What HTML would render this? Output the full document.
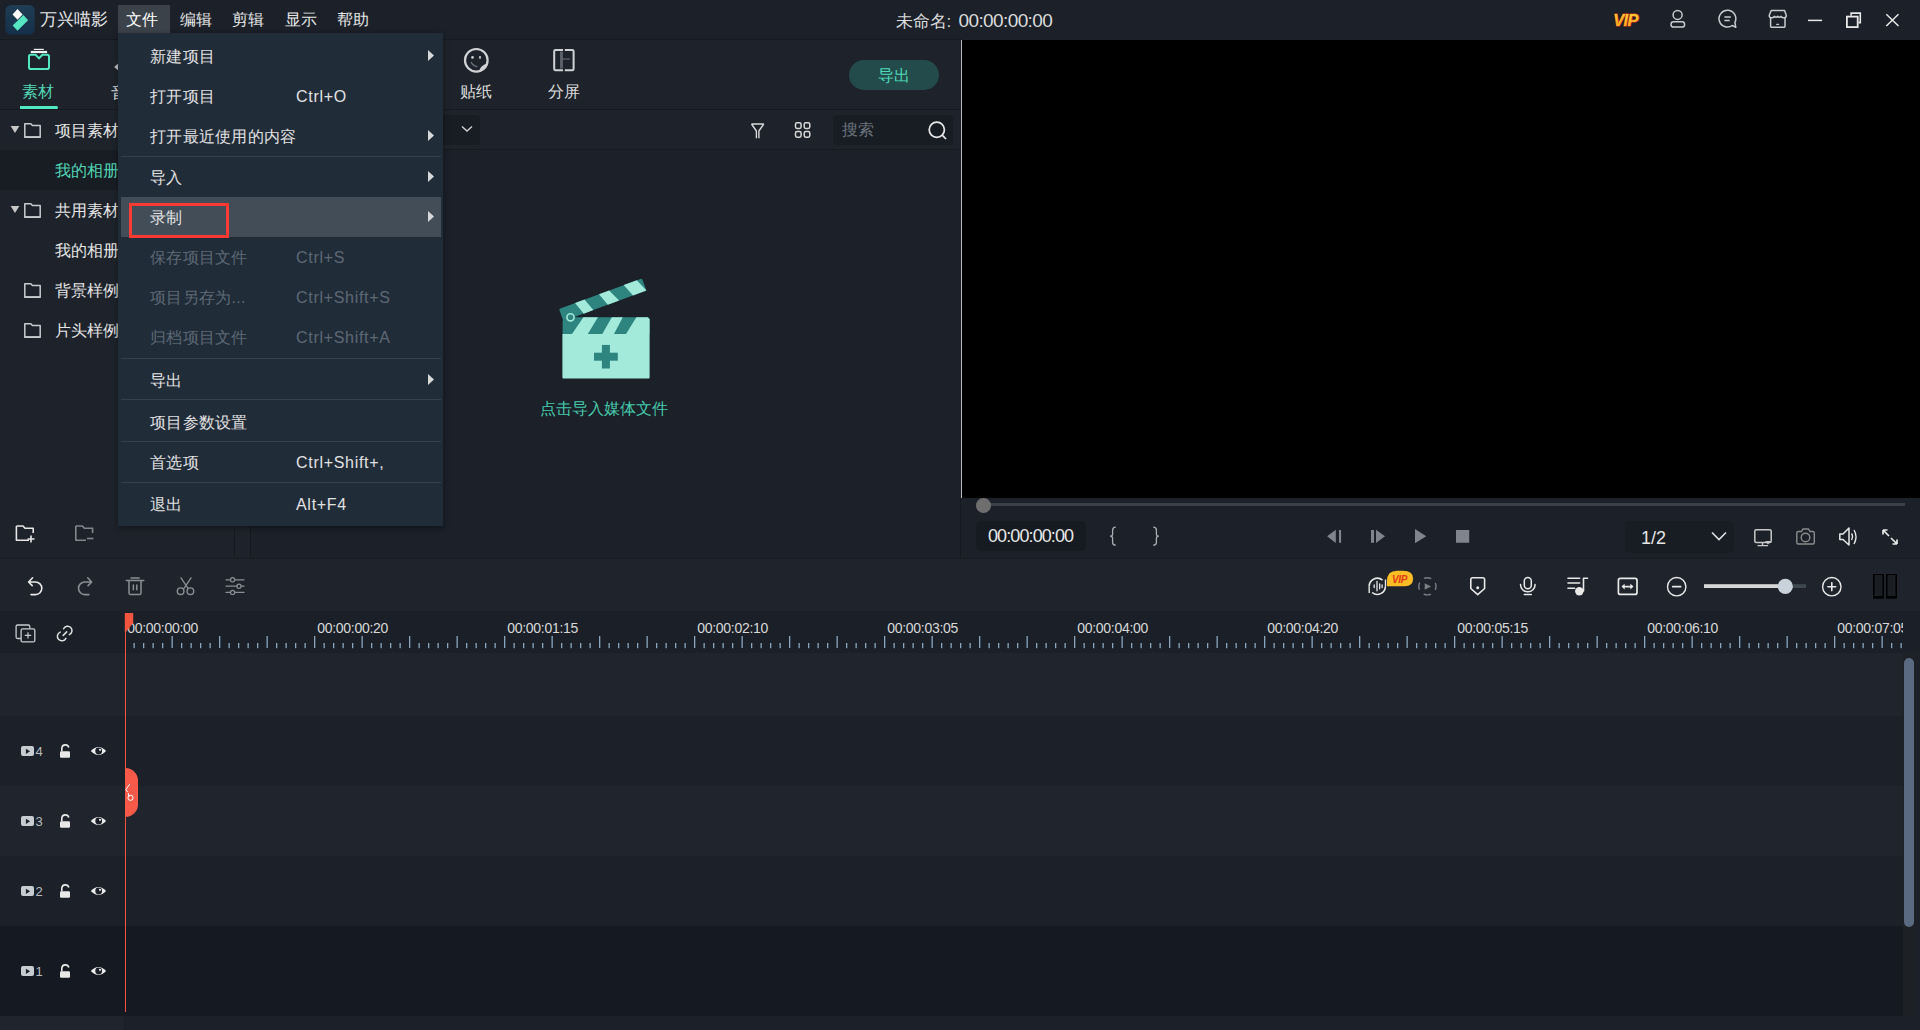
<!DOCTYPE html>
<html><head><meta charset="utf-8">
<style>
*{box-sizing:border-box;margin:0;padding:0}
html,body{width:1920px;height:1030px;overflow:hidden;background:#1c2129;font-family:"Liberation Sans",sans-serif;color:#dcdcdc}
.a{position:absolute}
.t{position:absolute;white-space:nowrap;line-height:1}
.m{letter-spacing:0.25px}
svg{position:absolute;overflow:visible}
</style></head><body>
<!-- title bar -->
<div class="a" style="left:0;top:0;width:1920px;height:40px;background:#1b2029"></div>
<div class="a" style="left:0;top:39px;width:962px;height:1px;background:#161b22"></div>
<!-- title content -->
<svg style="left:0;top:0" width="40" height="40">
<defs><linearGradient id="lg" x1="0" y1="0" x2="0" y2="1"><stop offset="0" stop-color="#1f3d55"/><stop offset="1" stop-color="#15304a"/></linearGradient></defs>
<rect x="5.4" y="5.1" width="29.3" height="29.5" rx="5.6" fill="url(#lg)"/>
<polygon points="17.5,9.1 22.6,14.5 17.5,19.8 12.5,14.4" fill="#fff"/>
<polygon points="23.4,15 28.1,20.2 17.5,30.7 12.7,25.4" fill="#56e6c4"/>
</svg>
<div class="t" style="left:40px;top:11px;font-size:17px;color:#e6e6e6">万兴喵影</div>
<div class="a" style="left:118px;top:5px;width:52px;height:28px;background:#3c4249"></div>
<div class="t" style="left:126px;top:12px;font-size:16px;color:#fff">文件</div>
<div class="t" style="left:180px;top:12px;font-size:16px;color:#e6e6e6">编辑</div>
<div class="t" style="left:232px;top:12px;font-size:16px;color:#e6e6e6">剪辑</div>
<div class="t" style="left:285px;top:12px;font-size:16px;color:#e6e6e6">显示</div>
<div class="t" style="left:337px;top:12px;font-size:16px;color:#e6e6e6">帮助</div>
<div class="t" style="left:895.5px;top:10.5px;font-size:17px;color:#dcdcdc">未命名: <span style="font-size:19px;letter-spacing:-0.6px;margin-left:2.5px;position:relative;top:0.5px">00:00:00:00</span></div>
<svg style="left:1600px;top:0" width="320" height="40">
<defs><linearGradient id="vg" x1="0" y1="0" x2="0" y2="1"><stop offset="0" stop-color="#ffd23a"/><stop offset="1" stop-color="#ffa51c"/></linearGradient></defs>
<text x="13.2" y="25.8" font-family="Liberation Sans" font-weight="bold" font-style="italic" font-size="16.5" letter-spacing="-0.6" fill="url(#vg)" stroke="#d8381a" stroke-width="1.1" paint-order="stroke">VIP</text>
<g fill="none" stroke="#c8ccd0" stroke-width="1.5">
<circle cx="77.6" cy="14.9" r="4.5"/>
<rect x="71" y="21.8" width="13.6" height="5.3" rx="2.6"/>
<path d="M132.3,25.5 A8.4,8.4 0 1 1 134.9,22.5 L135.8,27.3 Z" stroke-linejoin="round"/>
<path d="M124.4,17.1 H130.8 M124.4,20.4 H129.7"/>
<path d="M170.6,17 V26.6 Q170.6,27.3 171.3,27.3 H184.3 Q185,27.3 185,26.6 V17" />
<path d="M171.2,10.5 H184.6 L186.3,15.5 Q186.3,17.8 183.8,17.8 Q181.8,17.8 181,16.3 Q179.5,18.3 177.7,16.3 Q176,18.3 174.4,16.3 Q173.6,17.8 171.6,17.8 Q169.2,17.8 169.2,15.5 Z" stroke-linejoin="round"/>
<path d="M176.2,24.4 H179.1" stroke-width="1.2"/>
<path d="M208,20.4 H222.1" stroke="#e8e8e8" stroke-width="1.5"/>
<rect x="246.9" y="16.6" width="10.8" height="10.5" stroke="#e8e8e8" stroke-width="1.8"/>
<path d="M251.1,15.7 V13.1 H260.3 V22.6 H258.5" stroke="#e8e8e8" stroke-width="1.6"/>
<path d="M286.3,14.2 L298.5,26 M298.5,14.2 L286.3,26" stroke="#e8e8e8" stroke-width="1.5"/>
</g>
</svg>
<!-- media panel -->
<div class="a" id="media" style="left:0;top:40px;width:960px;height:518px;background:#1e232b"></div>
<!-- media content -->
<div class="a" style="left:0;top:109px;width:960px;height:1px;background:#171b21"></div>
<div class="a" style="left:251px;top:150px;width:709px;height:408px;background:#1b2029"></div>
<div class="a" style="left:250px;top:149px;width:710px;height:1px;background:#171b21"></div>
<div class="a" style="left:234px;top:110px;width:1px;height:448px;background:#15191f"></div>
<div class="a" style="left:250px;top:110px;width:1px;height:448px;background:#15191f"></div>
<div class="a" style="left:0;top:150px;width:234px;height:40px;background:#181d24"></div>
<svg style="left:26px;top:46px" width="28" height="28">
<rect x="4.8" y="1.8" width="10" height="1.2" fill="#f2f2f2" transform="translate(3,1)"/>
<rect x="4.8" y="4.9" width="16.3" height="2.2" fill="#f2f2f2"/>
<path d="M3,10.6 Q3,8.8 4.8,8.8 H9.6 L13,12.4 L16.4,8.8 H21.2 Q23,8.8 23,10.6 V21.2 Q23,23 21.2,23 H4.8 Q3,23 3,21.2 Z" fill="none" stroke="#52e8c4" stroke-width="2" stroke-linejoin="round"/>
</svg>
<div class="t" style="left:22px;top:84px;font-size:16px;color:#52d6b5">素材</div>
<div class="a" style="left:20px;top:106px;width:38px;height:3px;background:#52e8c4;border-radius:0 2px 2px 0"></div>
<div class="t" style="left:110.5px;top:85px;font-size:16px;color:#dcdcdc">音频</div>
<svg style="left:110px;top:60px" width="10" height="14"><polygon points="4.6,7 8.5,3.4 8.5,10.4" fill="#c8c8c8" stroke="#c8c8c8" stroke-width="0.6" stroke-linejoin="round"/></svg>
<div class="t" style="left:460px;top:84px;font-size:16px;color:#dcdcdc">贴纸</div>
<div class="t" style="left:548px;top:84px;font-size:16px;color:#dcdcdc">分屏</div>
<svg style="left:10px;top:125px" width="10" height="8"><polygon points="0.6,0.9 9.4,0.9 5,8" fill="#c8c8c8"/></svg>
<svg style="left:24px;top:123px" width="18" height="16"><path d="M0.8,0.8 H6.8 L8.4,2.5 H16.2 V14.2 H0.8 Z" fill="none" stroke="#c8ccd0" stroke-width="1.5" stroke-linejoin="round"/><rect x="0.8" y="13.2" width="15.4" height="1.8" fill="#c8ccd0"/></svg>
<div class="t" style="left:55px;top:123px;font-size:16px;color:#e6e6e6">项目素材</div>
<div class="t" style="left:55px;top:163px;font-size:16px;color:#52d6b5">我的相册</div>
<svg style="left:10px;top:205px" width="10" height="8"><polygon points="0.6,0.9 9.4,0.9 5,8" fill="#c8c8c8"/></svg>
<svg style="left:24px;top:203px" width="18" height="16"><path d="M0.8,0.8 H6.8 L8.4,2.5 H16.2 V14.2 H0.8 Z" fill="none" stroke="#c8ccd0" stroke-width="1.5" stroke-linejoin="round"/><rect x="0.8" y="13.2" width="15.4" height="1.8" fill="#c8ccd0"/></svg>
<div class="t" style="left:55px;top:203px;font-size:16px;color:#e6e6e6">共用素材</div>
<div class="t" style="left:55px;top:243px;font-size:16px;color:#e6e6e6">我的相册</div>
<svg style="left:24px;top:283px" width="18" height="16"><path d="M0.8,0.8 H6.8 L8.4,2.5 H16.2 V14.2 H0.8 Z" fill="none" stroke="#c8ccd0" stroke-width="1.5" stroke-linejoin="round"/><rect x="0.8" y="13.2" width="15.4" height="1.8" fill="#c8ccd0"/></svg>
<div class="t" style="left:55px;top:283px;font-size:16px;color:#e6e6e6">背景样例</div>
<svg style="left:24px;top:323px" width="18" height="16"><path d="M0.8,0.8 H6.8 L8.4,2.5 H16.2 V14.2 H0.8 Z" fill="none" stroke="#c8ccd0" stroke-width="1.5" stroke-linejoin="round"/><rect x="0.8" y="13.2" width="15.4" height="1.8" fill="#c8ccd0"/></svg>
<div class="t" style="left:55px;top:323px;font-size:16px;color:#e6e6e6">片头样例</div>
<div class="a" style="left:849px;top:60px;width:90px;height:30px;border-radius:15px;background:#234b4b"></div>
<div class="t" style="left:877.5px;top:68px;font-size:16px;color:#4fdcb8">导出</div>
<div class="a" style="left:240px;top:115px;width:240px;height:30px;border-radius:4px;background:#181d24"></div>
<svg style="left:461px;top:125px" width="12" height="8"><polyline points="1,1.5 6,6 11,1.5" fill="none" stroke="#d0d0d0" stroke-width="1.4"/></svg>
<div class="a" style="left:833px;top:115px;width:120px;height:30px;border-radius:4px;background:#181d24"></div>
<div class="t" style="left:842px;top:122px;font-size:16px;color:#6c737b">搜索</div>
<!-- preview -->
<div class="a" style="left:960px;top:40px;width:960px;height:518px;background:#1c2129"></div>
<div class="a" style="left:962px;top:40px;width:958px;height:458px;background:#000"></div>
<div class="a" style="left:961px;top:40px;width:1px;height:458px;background:#b8b8b8"></div>
<div class="a" style="left:960px;top:498px;width:1px;height:60px;background:#161a20"></div>
<!-- clapper -->
<svg style="left:0;top:0" width="960" height="560">
<g transform="translate(559.1,309.4) rotate(-20.2)">
<rect x="0" y="-0.5" width="88.5" height="13" rx="1.5" fill="#2e8580"/>
<polygon points="17.2,-0.5 27.2,-0.5 31.9,12.5 21.7,12.5" fill="#a3eadb"/>
<polygon points="42.7,-0.5 53.5,-0.5 59.4,12.5 47.3,12.5" fill="#a3eadb"/>
<polygon points="69,-0.5 83,-0.5 88.5,12.5 74.2,12.5" fill="#a3eadb"/>
</g>
<path d="M562.6,322 Q562.6,317.3 567,317.3 H647.6 Q649.6,317.3 649.6,319.3 V334 H562.6 Z" fill="#2e8580"/>
<polygon points="572,334 587.8,334 597.9,317.3 583.4,317.3" fill="#a3eadb"/>
<polygon points="602.3,334 614,334 622.8,317.3 611.8,317.3" fill="#a3eadb"/>
<polygon points="626,334 649.6,334 649.6,319.3 647.6,317.3 636.4,317.3" fill="#a3eadb"/>
<circle cx="570.5" cy="317.3" r="3.6" fill="#2e8580" stroke="#a3eadb" stroke-width="1.6"/>
<path d="M562.4,334 H649.6 V377.5 Q649.6,378.5 648.6,378.5 H563.4 Q562.4,378.5 562.4,377.5 Z" fill="#a3eadb"/>
<rect x="601.9" y="344.9" width="8" height="23.6" fill="#2e8580"/>
<rect x="594" y="352.7" width="23.8" height="8" fill="#2e8580"/>
</svg>
<div class="t" style="left:540px;top:401px;font-size:16px;color:#45c9ab">点击导入媒体文件</div>
<!-- media toolbar icons -->
<svg style="left:0;top:0" width="960" height="160">
<path d="M751.5,124 H763.8 M751.5,124 L756.4,131 V138.2 M763.8,124 L758.9,131 V138.2" fill="none" stroke="#d8d8d8" stroke-width="1.4" stroke-linejoin="round"/>
<rect x="795.5" y="122.8" width="5.6" height="5.6" rx="1.6" fill="none" stroke="#d8d8d8" stroke-width="1.5"/>
<rect x="804.2" y="122.8" width="5.6" height="5.6" rx="1.6" fill="none" stroke="#d8d8d8" stroke-width="1.5"/>
<rect x="795.5" y="131.6" width="5.6" height="5.6" rx="1.6" fill="none" stroke="#d8d8d8" stroke-width="1.5"/>
<rect x="804.2" y="131.6" width="5.6" height="5.6" rx="1.6" fill="none" stroke="#d8d8d8" stroke-width="1.5"/>
<circle cx="936.8" cy="129.8" r="7.6" fill="none" stroke="#e8e8e8" stroke-width="1.7"/>
<line x1="942.2" y1="135.2" x2="946" y2="139" stroke="#e8e8e8" stroke-width="1.7"/>
<!-- sticker -->
<circle cx="476.3" cy="60.3" r="11.3" fill="none" stroke="#d0d2d5" stroke-width="2.2"/>
<circle cx="472.5" cy="57.4" r="1.3" fill="#d0d2d5"/><rect x="479.2" y="56" width="1.6" height="2.8" fill="#d0d2d5"/>
<path d="M471,62.2 Q473,66 477.3,66.8" fill="none" stroke="#6a6f75" stroke-width="1.4"/>
<path d="M479.2,72 Q479.5,65 488.2,63.5 A12.3,12.3 0 0 1 479.2,72 Z" fill="#d0d2d5"/>
<!-- split -->
<path d="M563,49.9 H555.6 Q554.2,49.9 554.2,51.3 V68.9 Q554.2,70.3 555.6,70.3 H563 M564.8,49.9 H572.2 Q573.6,49.9 573.6,51.3 V68.9 Q573.6,70.3 572.2,70.3 H564.8" fill="none" stroke="#d0d2d5" stroke-width="2"/>
<rect x="560" y="51.5" width="3" height="17" fill="#5a6068"/>
<path d="M563,59 H570.2" stroke="#5a6068" stroke-width="1.3"/>
</svg>
<!-- bottom folder icons -->
<svg style="left:0;top:0" width="120" height="560">
<path d="M16.4,526 H23 L25,528.3 H33.2 V533 M29,540.2 H16.4 V526" fill="none" stroke="#e6e6e6" stroke-width="1.6" stroke-linejoin="round"/>
<path d="M31,535.5 V542.5 M27.5,539 H34.5" stroke="#e6e6e6" stroke-width="1.6"/>
<path d="M75.8,526 H82.4 L84.4,528.3 H92.6 V533 M86,540.2 H75.8 V526" fill="none" stroke="#80868c" stroke-width="1.6" stroke-linejoin="round"/>
<path d="M87,538.5 H93.5" stroke="#80868c" stroke-width="1.6"/>
</svg>
<!-- preview controls -->
<div class="a" style="left:984px;top:503px;width:921px;height:3px;background:#3a4149"></div>
<div class="a" style="left:976px;top:497.5px;width:15px;height:15px;border-radius:50%;background:#6e6e6e"></div>
<div class="a" style="left:976px;top:521px;width:110px;height:30px;border-radius:5px;background:#161b21"></div>
<div class="t" style="left:988px;top:527px;font-size:18px;letter-spacing:-0.9px;color:#e8e8e8">00:00:00:00</div>
<svg style="left:1100px;top:520px" width="70" height="30">
<path d="M15.8,7.2 Q12.6,7.2 12.6,10.2 V14.2 Q12.6,16 10.2,16.2 Q12.6,16.4 12.6,18.2 V22.4 Q12.6,25.2 15.8,25.2" fill="none" stroke="#a8acb0" stroke-width="1.3"/>
<path d="M53.2,7.2 Q56.4,7.2 56.4,10.2 V14.2 Q56.4,16 58.8,16.2 Q56.4,16.4 56.4,18.2 V22.4 Q56.4,25.2 53.2,25.2" fill="none" stroke="#a8acb0" stroke-width="1.3"/>
</svg>
<svg style="left:1300px;top:500px" width="620" height="60">
<polygon points="27.1,36.25 35.8,29.8 35.8,42.9" fill="#7f858d"/>
<rect x="39" y="30" width="2.1" height="12.75" fill="#7f858d"/>
<rect x="71" y="30" width="3" height="12.75" fill="#7f858d"/>
<polygon points="76,29.8 76,42.9 85,36.25" fill="#7f858d"/>
<polygon points="115,29 115,43.2 126.25,36.25" fill="#7f858d"/>
<rect x="156" y="30" width="13.2" height="12.75" fill="#7f858d"/>
</svg>
<div class="a" style="left:1625px;top:521px;width:109px;height:32px;border-radius:5px;background:#181d24"></div>
<div class="t" style="left:1641px;top:529px;font-size:18px;color:#e6e6e6">1/2</div>
<svg style="left:1700px;top:520px" width="220" height="40">
<polyline points="12,12.5 19,19.5 26,12.5" fill="none" stroke="#e0e0e0" stroke-width="1.6"/>
<rect x="54.8" y="9.8" width="16.4" height="12.6" rx="1.5" fill="none" stroke="#c8c8c8" stroke-width="1.5"/>
<path d="M62.5,22.5 V25.5 M57.5,25.6 H68" stroke="#c8c8c8" stroke-width="1.4"/>
<polygon points="65,21 71,21 68,24.5" fill="#c8c8c8"/>
<path d="M96.8,13 Q96.8,11.5 98.3,11.5 H101.5 L103,9 H108.5 L110,11.5 H112.8 Q114.3,11.5 114.3,13 V22.5 Q114.3,24 112.8,24 H98.3 Q96.8,24 96.8,22.5 Z" fill="none" stroke="#8a8a8a" stroke-width="1.4"/>
<circle cx="105.5" cy="17.5" r="4.3" fill="none" stroke="#8a8a8a" stroke-width="1.4"/>
<path d="M139.8,14 H143 L149,8 V25 L143,19.5 H139.8 Z" fill="none" stroke="#e6e6e6" stroke-width="1.5" stroke-linejoin="round"/>
<path d="M151.5,13.5 Q153.5,16.5 151.5,20" fill="none" stroke="#e6e6e6" stroke-width="1.4"/>
<path d="M154,10 Q158,16.5 154,24" fill="none" stroke="#e6e6e6" stroke-width="1.4"/>
<path d="M183,10 L189,16 M183,10 V14.5 M183,10 H187.5" fill="none" stroke="#e8e8e8" stroke-width="1.7"/>
<path d="M197,24 L191,18 M197,24 V19.5 M197,24 H192.5" fill="none" stroke="#e8e8e8" stroke-width="1.7"/>
</svg>
<!-- timeline toolbar -->
<div class="a" style="left:0;top:558px;width:1920px;height:1px;background:#181c22"></div>
<div class="a" style="left:0;top:559px;width:1920px;height:52px;background:#1f242c"></div>
<!-- ruler -->
<div class="a" style="left:0;top:611px;width:1920px;height:42px;background:#1b2028"></div>
<!-- tracks -->
<div class="a" style="left:0;top:653px;width:1903px;height:63px;background:#1f242d"></div>
<div class="a" style="left:0;top:716px;width:1903px;height:70px;background:#1b2029"></div>
<div class="a" style="left:0;top:786px;width:1903px;height:70px;background:#1f242d"></div>
<div class="a" style="left:0;top:856px;width:1903px;height:70px;background:#1b2029"></div>
<div class="a" style="left:0;top:926px;width:1903px;height:89.5px;background:#151a22"></div>
<div class="a" style="left:1903px;top:653px;width:12px;height:362.5px;background:#1d2125"></div>
<div class="a" style="left:1904px;top:658px;width:10px;height:269px;border-radius:5px;background:#5a6a80"></div>
<div class="a" style="left:0;top:1015.5px;width:1920px;height:14.5px;background:#1c2129"></div>
<div class="a" style="left:0;top:1015.5px;width:124px;height:14.5px;background:#1f242d"></div>
<div class="a" style="left:124px;top:1015.5px;width:1px;height:14.5px;background:#191d23"></div>

<!-- timeline toolbar icons -->
<svg style="left:0;top:0" width="1920" height="1030">
<g fill="none" stroke-linecap="round" stroke-linejoin="round">
<path d="M32.6,577.8 L28.6,582 L32.2,585.6 M28.6,582 H35.5 A6.3,6.3 0 0 1 35.5,594.6 H31" stroke="#e8e8e8" stroke-width="1.6"/>
<path d="M87.7,577.8 L91.7,582 L88.1,585.6 M91.7,582 H84.8 A6.3,6.3 0 0 0 84.8,594.6 H88.9" stroke="#8a8e94" stroke-width="1.6"/>
<path d="M126.3,580.5 H143.8 M131,578 H139.2 M129,581 V593 Q129,594.6 130.6,594.6 H139.4 Q141,594.6 141,593 V581 M133.4,585 V589.8 M136.8,585 V589.8" stroke="#8a8e94" stroke-width="1.5"/>
<path d="M181,577.8 L188.2,588.6 M191,577.8 L183.8,588.6" stroke="#8a8e94" stroke-width="1.3"/>
<circle cx="180.6" cy="591.2" r="3.3" stroke="#8a8e94" stroke-width="1.4"/>
<circle cx="190.4" cy="591.2" r="3.3" stroke="#8a8e94" stroke-width="1.4"/>
<path d="M226,579.8 H230.4 M234.8,579.8 H244 M226,586.2 H236.8 M241.2,586.2 H244 M226,592.4 H230.4 M234.8,592.4 H244" stroke="#8a8e94" stroke-width="1.2"/>
<circle cx="232.6" cy="579.8" r="2.1" stroke="#8a8e94" stroke-width="1.2"/>
<circle cx="239" cy="586.2" r="2.1" stroke="#8a8e94" stroke-width="1.2"/>
<circle cx="232.6" cy="592.4" r="2.1" stroke="#8a8e94" stroke-width="1.2"/>
<!-- right -->
<path d="M1382.5,580.1 A8.1,8.1 0 0 0 1369.2,586.3 M1385.4,586.3 A8.1,8.1 0 0 1 1372.1,592.5" stroke="#e8e8e8" stroke-width="1.6" stroke-linecap="butt"/>
<path d="M1385.5,579.6 V586.3 M1369.2,586.3 V593" stroke="#e8e8e8" stroke-width="1.4" stroke-linecap="butt"/>
<path d="M1374.2,585 V587.6 M1377,581.4 V590.8 M1379.7,583.8 V588.8 M1382.1,585 V587.6" stroke="#e8e8e8" stroke-width="1.3"/>
<circle cx="1427.4" cy="586.3" r="8.6" stroke="#7a7f86" stroke-width="1.4" stroke-dasharray="7.5 6" stroke-dashoffset="3.75" stroke-linecap="butt"/>
<path d="M1470.8,579.6 Q1470.8,577.8 1472.6,577.8 H1482.8 Q1484.6,577.8 1484.6,579.6 V588.5 L1477.7,594.6 L1470.8,588.5 Z" stroke="#e8e8e8" stroke-width="1.6"/>
<rect x="1524.3" y="577.6" width="7" height="11.2" rx="3.5" stroke="#e8e8e8" stroke-width="1.5"/>
<path d="M1520.5,584.5 A7.3,7.3 0 0 0 1535.1,584.5 M1524.3,594.5 H1531.3" stroke="#e8e8e8" stroke-width="1.5"/>
<path d="M1568,578.2 H1579.6 M1568,583 H1579.6 M1568,588.3 H1574.6 M1583.5,591 V578.2 H1587.5" stroke="#e8e8e8" stroke-width="1.6"/>
<rect x="1618.4" y="578.4" width="18.6" height="16" rx="2" stroke="#e8e8e8" stroke-width="1.7"/>
<path d="M1624,586.6 H1631" stroke="#e8e8e8" stroke-width="1.6"/>
<circle cx="1676.7" cy="586.7" r="9.2" stroke="#e8e8e8" stroke-width="1.4"/>
<path d="M1672.8,586.7 H1680.6" stroke="#e8e8e8" stroke-width="1.8"/>
<circle cx="1831.8" cy="586.7" r="9.2" stroke="#e8e8e8" stroke-width="1.4"/>
<path d="M1827.9,586.7 H1835.7 M1831.8,582.8 V590.6" stroke="#e8e8e8" stroke-width="1.6"/>
</g>
<circle cx="1579.3" cy="591.3" r="4.2" fill="#e8e8e8"/>
<circle cx="1477.7" cy="587.8" r="1.5" fill="#e8e8e8"/>
<polygon points="1424.7,583.2 1424.7,589.8 1431,586.5" fill="#7a7f86"/>
<polygon points="1621.5,586.6 1624.6,583.8 1624.6,589.4" fill="#e8e8e8"/>
<polygon points="1633.5,586.6 1630.4,583.8 1630.4,589.4" fill="#e8e8e8"/>
<path d="M1387,581 Q1387,570.7 1397,570.7 H1403 Q1413.1,570.7 1413.1,578.5 Q1413.1,586.3 1405,586.3 H1387 Z" fill="#fbbd26"/>
<text x="1392" y="582.6" font-family="Liberation Sans" font-weight="bold" font-style="italic" font-size="10" letter-spacing="-0.4" fill="#e33b17">VIP</text>
<rect x="1704" y="584.2" width="81" height="3.8" fill="#d6d6d6"/>
<rect x="1785" y="584.2" width="21" height="3.8" fill="#3f474f"/>
<circle cx="1785.3" cy="586.4" r="7.6" fill="#c9d1db"/>
<rect x="1873" y="574" width="11" height="24.7" fill="#000"/>
<rect x="1874.5" y="575" width="8" height="21" fill="#1a1d22"/>
<rect x="1886" y="574" width="11" height="24.7" fill="#000"/>
<rect x="1887.5" y="575" width="8" height="21" fill="#1a1d22"/>
</svg>
<svg style="left:0;top:0" width="1920" height="1030">
<rect x="133.50" y="643" width="1.3" height="5.2" fill="#8aa5bd"/>
<rect x="143.00" y="643" width="1.3" height="5.2" fill="#8aa5bd"/>
<rect x="152.50" y="643" width="1.3" height="5.2" fill="#8aa5bd"/>
<rect x="162.00" y="643" width="1.3" height="5.2" fill="#8aa5bd"/>
<rect x="171.50" y="636" width="1.3" height="12" fill="#8aa5bd"/>
<rect x="181.00" y="643" width="1.3" height="5.2" fill="#8aa5bd"/>
<rect x="190.50" y="643" width="1.3" height="5.2" fill="#8aa5bd"/>
<rect x="200.00" y="643" width="1.3" height="5.2" fill="#8aa5bd"/>
<rect x="209.50" y="643" width="1.3" height="5.2" fill="#8aa5bd"/>
<rect x="219.00" y="636" width="1.3" height="12" fill="#8aa5bd"/>
<rect x="228.50" y="643" width="1.3" height="5.2" fill="#8aa5bd"/>
<rect x="238.00" y="643" width="1.3" height="5.2" fill="#8aa5bd"/>
<rect x="247.50" y="643" width="1.3" height="5.2" fill="#8aa5bd"/>
<rect x="257.00" y="643" width="1.3" height="5.2" fill="#8aa5bd"/>
<rect x="266.50" y="636" width="1.3" height="12" fill="#8aa5bd"/>
<rect x="276.00" y="643" width="1.3" height="5.2" fill="#8aa5bd"/>
<rect x="285.50" y="643" width="1.3" height="5.2" fill="#8aa5bd"/>
<rect x="295.00" y="643" width="1.3" height="5.2" fill="#8aa5bd"/>
<rect x="304.50" y="643" width="1.3" height="5.2" fill="#8aa5bd"/>
<rect x="314.00" y="636" width="1.3" height="12" fill="#8aa5bd"/>
<rect x="323.50" y="643" width="1.3" height="5.2" fill="#8aa5bd"/>
<rect x="333.00" y="643" width="1.3" height="5.2" fill="#8aa5bd"/>
<rect x="342.50" y="643" width="1.3" height="5.2" fill="#8aa5bd"/>
<rect x="352.00" y="643" width="1.3" height="5.2" fill="#8aa5bd"/>
<rect x="361.50" y="636" width="1.3" height="12" fill="#8aa5bd"/>
<rect x="371.00" y="643" width="1.3" height="5.2" fill="#8aa5bd"/>
<rect x="380.50" y="643" width="1.3" height="5.2" fill="#8aa5bd"/>
<rect x="390.00" y="643" width="1.3" height="5.2" fill="#8aa5bd"/>
<rect x="399.50" y="643" width="1.3" height="5.2" fill="#8aa5bd"/>
<rect x="409.00" y="636" width="1.3" height="12" fill="#8aa5bd"/>
<rect x="418.50" y="643" width="1.3" height="5.2" fill="#8aa5bd"/>
<rect x="428.00" y="643" width="1.3" height="5.2" fill="#8aa5bd"/>
<rect x="437.50" y="643" width="1.3" height="5.2" fill="#8aa5bd"/>
<rect x="447.00" y="643" width="1.3" height="5.2" fill="#8aa5bd"/>
<rect x="456.50" y="636" width="1.3" height="12" fill="#8aa5bd"/>
<rect x="466.00" y="643" width="1.3" height="5.2" fill="#8aa5bd"/>
<rect x="475.50" y="643" width="1.3" height="5.2" fill="#8aa5bd"/>
<rect x="485.00" y="643" width="1.3" height="5.2" fill="#8aa5bd"/>
<rect x="494.50" y="643" width="1.3" height="5.2" fill="#8aa5bd"/>
<rect x="504.00" y="636" width="1.3" height="12" fill="#8aa5bd"/>
<rect x="513.50" y="643" width="1.3" height="5.2" fill="#8aa5bd"/>
<rect x="523.00" y="643" width="1.3" height="5.2" fill="#8aa5bd"/>
<rect x="532.50" y="643" width="1.3" height="5.2" fill="#8aa5bd"/>
<rect x="542.00" y="643" width="1.3" height="5.2" fill="#8aa5bd"/>
<rect x="551.50" y="636" width="1.3" height="12" fill="#8aa5bd"/>
<rect x="561.00" y="643" width="1.3" height="5.2" fill="#8aa5bd"/>
<rect x="570.50" y="643" width="1.3" height="5.2" fill="#8aa5bd"/>
<rect x="580.00" y="643" width="1.3" height="5.2" fill="#8aa5bd"/>
<rect x="589.50" y="643" width="1.3" height="5.2" fill="#8aa5bd"/>
<rect x="599.00" y="636" width="1.3" height="12" fill="#8aa5bd"/>
<rect x="608.50" y="643" width="1.3" height="5.2" fill="#8aa5bd"/>
<rect x="618.00" y="643" width="1.3" height="5.2" fill="#8aa5bd"/>
<rect x="627.50" y="643" width="1.3" height="5.2" fill="#8aa5bd"/>
<rect x="637.00" y="643" width="1.3" height="5.2" fill="#8aa5bd"/>
<rect x="646.50" y="636" width="1.3" height="12" fill="#8aa5bd"/>
<rect x="656.00" y="643" width="1.3" height="5.2" fill="#8aa5bd"/>
<rect x="665.50" y="643" width="1.3" height="5.2" fill="#8aa5bd"/>
<rect x="675.00" y="643" width="1.3" height="5.2" fill="#8aa5bd"/>
<rect x="684.50" y="643" width="1.3" height="5.2" fill="#8aa5bd"/>
<rect x="694.00" y="636" width="1.3" height="12" fill="#8aa5bd"/>
<rect x="703.50" y="643" width="1.3" height="5.2" fill="#8aa5bd"/>
<rect x="713.00" y="643" width="1.3" height="5.2" fill="#8aa5bd"/>
<rect x="722.50" y="643" width="1.3" height="5.2" fill="#8aa5bd"/>
<rect x="732.00" y="643" width="1.3" height="5.2" fill="#8aa5bd"/>
<rect x="741.50" y="636" width="1.3" height="12" fill="#8aa5bd"/>
<rect x="751.00" y="643" width="1.3" height="5.2" fill="#8aa5bd"/>
<rect x="760.50" y="643" width="1.3" height="5.2" fill="#8aa5bd"/>
<rect x="770.00" y="643" width="1.3" height="5.2" fill="#8aa5bd"/>
<rect x="779.50" y="643" width="1.3" height="5.2" fill="#8aa5bd"/>
<rect x="789.00" y="636" width="1.3" height="12" fill="#8aa5bd"/>
<rect x="798.50" y="643" width="1.3" height="5.2" fill="#8aa5bd"/>
<rect x="808.00" y="643" width="1.3" height="5.2" fill="#8aa5bd"/>
<rect x="817.50" y="643" width="1.3" height="5.2" fill="#8aa5bd"/>
<rect x="827.00" y="643" width="1.3" height="5.2" fill="#8aa5bd"/>
<rect x="836.50" y="636" width="1.3" height="12" fill="#8aa5bd"/>
<rect x="846.00" y="643" width="1.3" height="5.2" fill="#8aa5bd"/>
<rect x="855.50" y="643" width="1.3" height="5.2" fill="#8aa5bd"/>
<rect x="865.00" y="643" width="1.3" height="5.2" fill="#8aa5bd"/>
<rect x="874.50" y="643" width="1.3" height="5.2" fill="#8aa5bd"/>
<rect x="884.00" y="636" width="1.3" height="12" fill="#8aa5bd"/>
<rect x="893.50" y="643" width="1.3" height="5.2" fill="#8aa5bd"/>
<rect x="903.00" y="643" width="1.3" height="5.2" fill="#8aa5bd"/>
<rect x="912.50" y="643" width="1.3" height="5.2" fill="#8aa5bd"/>
<rect x="922.00" y="643" width="1.3" height="5.2" fill="#8aa5bd"/>
<rect x="931.50" y="636" width="1.3" height="12" fill="#8aa5bd"/>
<rect x="941.00" y="643" width="1.3" height="5.2" fill="#8aa5bd"/>
<rect x="950.50" y="643" width="1.3" height="5.2" fill="#8aa5bd"/>
<rect x="960.00" y="643" width="1.3" height="5.2" fill="#8aa5bd"/>
<rect x="969.50" y="643" width="1.3" height="5.2" fill="#8aa5bd"/>
<rect x="979.00" y="636" width="1.3" height="12" fill="#8aa5bd"/>
<rect x="988.50" y="643" width="1.3" height="5.2" fill="#8aa5bd"/>
<rect x="998.00" y="643" width="1.3" height="5.2" fill="#8aa5bd"/>
<rect x="1007.50" y="643" width="1.3" height="5.2" fill="#8aa5bd"/>
<rect x="1017.00" y="643" width="1.3" height="5.2" fill="#8aa5bd"/>
<rect x="1026.50" y="636" width="1.3" height="12" fill="#8aa5bd"/>
<rect x="1036.00" y="643" width="1.3" height="5.2" fill="#8aa5bd"/>
<rect x="1045.50" y="643" width="1.3" height="5.2" fill="#8aa5bd"/>
<rect x="1055.00" y="643" width="1.3" height="5.2" fill="#8aa5bd"/>
<rect x="1064.50" y="643" width="1.3" height="5.2" fill="#8aa5bd"/>
<rect x="1074.00" y="636" width="1.3" height="12" fill="#8aa5bd"/>
<rect x="1083.50" y="643" width="1.3" height="5.2" fill="#8aa5bd"/>
<rect x="1093.00" y="643" width="1.3" height="5.2" fill="#8aa5bd"/>
<rect x="1102.50" y="643" width="1.3" height="5.2" fill="#8aa5bd"/>
<rect x="1112.00" y="643" width="1.3" height="5.2" fill="#8aa5bd"/>
<rect x="1121.50" y="636" width="1.3" height="12" fill="#8aa5bd"/>
<rect x="1131.00" y="643" width="1.3" height="5.2" fill="#8aa5bd"/>
<rect x="1140.50" y="643" width="1.3" height="5.2" fill="#8aa5bd"/>
<rect x="1150.00" y="643" width="1.3" height="5.2" fill="#8aa5bd"/>
<rect x="1159.50" y="643" width="1.3" height="5.2" fill="#8aa5bd"/>
<rect x="1169.00" y="636" width="1.3" height="12" fill="#8aa5bd"/>
<rect x="1178.50" y="643" width="1.3" height="5.2" fill="#8aa5bd"/>
<rect x="1188.00" y="643" width="1.3" height="5.2" fill="#8aa5bd"/>
<rect x="1197.50" y="643" width="1.3" height="5.2" fill="#8aa5bd"/>
<rect x="1207.00" y="643" width="1.3" height="5.2" fill="#8aa5bd"/>
<rect x="1216.50" y="636" width="1.3" height="12" fill="#8aa5bd"/>
<rect x="1226.00" y="643" width="1.3" height="5.2" fill="#8aa5bd"/>
<rect x="1235.50" y="643" width="1.3" height="5.2" fill="#8aa5bd"/>
<rect x="1245.00" y="643" width="1.3" height="5.2" fill="#8aa5bd"/>
<rect x="1254.50" y="643" width="1.3" height="5.2" fill="#8aa5bd"/>
<rect x="1264.00" y="636" width="1.3" height="12" fill="#8aa5bd"/>
<rect x="1273.50" y="643" width="1.3" height="5.2" fill="#8aa5bd"/>
<rect x="1283.00" y="643" width="1.3" height="5.2" fill="#8aa5bd"/>
<rect x="1292.50" y="643" width="1.3" height="5.2" fill="#8aa5bd"/>
<rect x="1302.00" y="643" width="1.3" height="5.2" fill="#8aa5bd"/>
<rect x="1311.50" y="636" width="1.3" height="12" fill="#8aa5bd"/>
<rect x="1321.00" y="643" width="1.3" height="5.2" fill="#8aa5bd"/>
<rect x="1330.50" y="643" width="1.3" height="5.2" fill="#8aa5bd"/>
<rect x="1340.00" y="643" width="1.3" height="5.2" fill="#8aa5bd"/>
<rect x="1349.50" y="643" width="1.3" height="5.2" fill="#8aa5bd"/>
<rect x="1359.00" y="636" width="1.3" height="12" fill="#8aa5bd"/>
<rect x="1368.50" y="643" width="1.3" height="5.2" fill="#8aa5bd"/>
<rect x="1378.00" y="643" width="1.3" height="5.2" fill="#8aa5bd"/>
<rect x="1387.50" y="643" width="1.3" height="5.2" fill="#8aa5bd"/>
<rect x="1397.00" y="643" width="1.3" height="5.2" fill="#8aa5bd"/>
<rect x="1406.50" y="636" width="1.3" height="12" fill="#8aa5bd"/>
<rect x="1416.00" y="643" width="1.3" height="5.2" fill="#8aa5bd"/>
<rect x="1425.50" y="643" width="1.3" height="5.2" fill="#8aa5bd"/>
<rect x="1435.00" y="643" width="1.3" height="5.2" fill="#8aa5bd"/>
<rect x="1444.50" y="643" width="1.3" height="5.2" fill="#8aa5bd"/>
<rect x="1454.00" y="636" width="1.3" height="12" fill="#8aa5bd"/>
<rect x="1463.50" y="643" width="1.3" height="5.2" fill="#8aa5bd"/>
<rect x="1473.00" y="643" width="1.3" height="5.2" fill="#8aa5bd"/>
<rect x="1482.50" y="643" width="1.3" height="5.2" fill="#8aa5bd"/>
<rect x="1492.00" y="643" width="1.3" height="5.2" fill="#8aa5bd"/>
<rect x="1501.50" y="636" width="1.3" height="12" fill="#8aa5bd"/>
<rect x="1511.00" y="643" width="1.3" height="5.2" fill="#8aa5bd"/>
<rect x="1520.50" y="643" width="1.3" height="5.2" fill="#8aa5bd"/>
<rect x="1530.00" y="643" width="1.3" height="5.2" fill="#8aa5bd"/>
<rect x="1539.50" y="643" width="1.3" height="5.2" fill="#8aa5bd"/>
<rect x="1549.00" y="636" width="1.3" height="12" fill="#8aa5bd"/>
<rect x="1558.50" y="643" width="1.3" height="5.2" fill="#8aa5bd"/>
<rect x="1568.00" y="643" width="1.3" height="5.2" fill="#8aa5bd"/>
<rect x="1577.50" y="643" width="1.3" height="5.2" fill="#8aa5bd"/>
<rect x="1587.00" y="643" width="1.3" height="5.2" fill="#8aa5bd"/>
<rect x="1596.50" y="636" width="1.3" height="12" fill="#8aa5bd"/>
<rect x="1606.00" y="643" width="1.3" height="5.2" fill="#8aa5bd"/>
<rect x="1615.50" y="643" width="1.3" height="5.2" fill="#8aa5bd"/>
<rect x="1625.00" y="643" width="1.3" height="5.2" fill="#8aa5bd"/>
<rect x="1634.50" y="643" width="1.3" height="5.2" fill="#8aa5bd"/>
<rect x="1644.00" y="636" width="1.3" height="12" fill="#8aa5bd"/>
<rect x="1653.50" y="643" width="1.3" height="5.2" fill="#8aa5bd"/>
<rect x="1663.00" y="643" width="1.3" height="5.2" fill="#8aa5bd"/>
<rect x="1672.50" y="643" width="1.3" height="5.2" fill="#8aa5bd"/>
<rect x="1682.00" y="643" width="1.3" height="5.2" fill="#8aa5bd"/>
<rect x="1691.50" y="636" width="1.3" height="12" fill="#8aa5bd"/>
<rect x="1701.00" y="643" width="1.3" height="5.2" fill="#8aa5bd"/>
<rect x="1710.50" y="643" width="1.3" height="5.2" fill="#8aa5bd"/>
<rect x="1720.00" y="643" width="1.3" height="5.2" fill="#8aa5bd"/>
<rect x="1729.50" y="643" width="1.3" height="5.2" fill="#8aa5bd"/>
<rect x="1739.00" y="636" width="1.3" height="12" fill="#8aa5bd"/>
<rect x="1748.50" y="643" width="1.3" height="5.2" fill="#8aa5bd"/>
<rect x="1758.00" y="643" width="1.3" height="5.2" fill="#8aa5bd"/>
<rect x="1767.50" y="643" width="1.3" height="5.2" fill="#8aa5bd"/>
<rect x="1777.00" y="643" width="1.3" height="5.2" fill="#8aa5bd"/>
<rect x="1786.50" y="636" width="1.3" height="12" fill="#8aa5bd"/>
<rect x="1796.00" y="643" width="1.3" height="5.2" fill="#8aa5bd"/>
<rect x="1805.50" y="643" width="1.3" height="5.2" fill="#8aa5bd"/>
<rect x="1815.00" y="643" width="1.3" height="5.2" fill="#8aa5bd"/>
<rect x="1824.50" y="643" width="1.3" height="5.2" fill="#8aa5bd"/>
<rect x="1834.00" y="636" width="1.3" height="12" fill="#8aa5bd"/>
<rect x="1843.50" y="643" width="1.3" height="5.2" fill="#8aa5bd"/>
<rect x="1853.00" y="643" width="1.3" height="5.2" fill="#8aa5bd"/>
<rect x="1862.50" y="643" width="1.3" height="5.2" fill="#8aa5bd"/>
<rect x="1872.00" y="643" width="1.3" height="5.2" fill="#8aa5bd"/>
<rect x="1881.50" y="636" width="1.3" height="12" fill="#8aa5bd"/>
<rect x="1891.00" y="643" width="1.3" height="5.2" fill="#8aa5bd"/>
<rect x="1900.50" y="643" width="1.3" height="5.2" fill="#8aa5bd"/>
</svg>
<div class="a" style="left:0;top:611px;width:1903px;height:42px;overflow:hidden">
<div class="t" style="left:127.3px;top:9.5px;font-size:14px;letter-spacing:-0.3px;color:#d8d8d8">00:00:00:00</div>
<div class="t" style="left:317.3px;top:9.5px;font-size:14px;letter-spacing:-0.3px;color:#d8d8d8">00:00:00:20</div>
<div class="t" style="left:507.3px;top:9.5px;font-size:14px;letter-spacing:-0.3px;color:#d8d8d8">00:00:01:15</div>
<div class="t" style="left:697.3px;top:9.5px;font-size:14px;letter-spacing:-0.3px;color:#d8d8d8">00:00:02:10</div>
<div class="t" style="left:887.3px;top:9.5px;font-size:14px;letter-spacing:-0.3px;color:#d8d8d8">00:00:03:05</div>
<div class="t" style="left:1077.3px;top:9.5px;font-size:14px;letter-spacing:-0.3px;color:#d8d8d8">00:00:04:00</div>
<div class="t" style="left:1267.3px;top:9.5px;font-size:14px;letter-spacing:-0.3px;color:#d8d8d8">00:00:04:20</div>
<div class="t" style="left:1457.3px;top:9.5px;font-size:14px;letter-spacing:-0.3px;color:#d8d8d8">00:00:05:15</div>
<div class="t" style="left:1647.3px;top:9.5px;font-size:14px;letter-spacing:-0.3px;color:#d8d8d8">00:00:06:10</div>
<div class="t" style="left:1837.3px;top:9.5px;font-size:14px;letter-spacing:-0.3px;color:#d8d8d8">00:00:07:05</div>
</div>
<svg style="left:0.6px;top:600.8px" width="100" height="60">
<path d="M28.8,27.5 V25.5 Q28.8,24 27.3,24 H16.6 Q15.1,24 15.1,25.5 V36 Q15.1,37.5 16.6,37.5 H20.1" fill="none" stroke="#c8ccd0" stroke-width="1.3"/>
<rect x="20.1" y="27.8" width="13.7" height="13.1" rx="1.5" fill="none" stroke="#c8ccd0" stroke-width="1.3"/>
<path d="M27,31.2 V37.6 M23.8,34.4 H30.2" stroke="#c8ccd0" stroke-width="1.2"/>
<path d="M62.6,27.75 A4.4,4.4 0 1 1 68.4,33.6 M59.25,31.1 A4.5,4.5 0 1 0 64.9,37.3 M62.2,34.4 L65.7,30.9" fill="none" stroke="#e0e0e0" stroke-width="1.5" stroke-linecap="round"/>
</svg>
<div class="a" style="left:124.8px;top:613px;width:1.5px;height:399px;background:#f2553f"></div>
<svg style="left:0;top:0" width="200" height="1030">
<polygon points="124.8,613 133.2,613 133.2,622.8 126,632 124.8,632" fill="#f2553f"/>
<path d="M125,768 H125.5 A12.5,12.5 0 0 1 138,780.5 V804.5 A12.5,12.5 0 0 1 125.5,817 H125 Z" fill="#f75a48"/>
<path d="M129.8,784 L126,789.5 L127.5,792 M128.2,793 L129,797" fill="none" stroke="#fff" stroke-width="1"/>
<circle cx="130.5" cy="797.8" r="2.6" fill="none" stroke="#fff" stroke-width="1"/>
</svg>
<svg style="left:0;top:739px" width="120" height="24">
<rect x="21" y="7.1" width="13" height="9.9" rx="2" fill="#c8ccd0"/>
<polygon points="25.9,9.7 25.9,14.9 30.1,12.3" fill="#1b2029"/>
<path d="M61.8,12.2 V9 A3.6,3.6 0 0 1 68.8,8.4" fill="none" stroke="#e8e8e8" stroke-width="1.6"/>
<rect x="60" y="12.3" width="10" height="6.5" rx="1.2" fill="#e8e8e8"/>
<path d="M90.8,12 Q98.5,3.8 106.1,12 Q98.5,20.2 90.8,12 Z" fill="#ececec"/>
<circle cx="98.7" cy="12" r="3.4" fill="#1b2029"/>
<circle cx="100" cy="10.8" r="1.1" fill="#ececec"/>
</svg>
<div class="t" style="left:35.5px;top:745px;font-size:13px;color:#b8bcc0">4</div>
<svg style="left:0;top:809px" width="120" height="24">
<rect x="21" y="7.1" width="13" height="9.9" rx="2" fill="#c8ccd0"/>
<polygon points="25.9,9.7 25.9,14.9 30.1,12.3" fill="#1b2029"/>
<path d="M61.8,12.2 V9 A3.6,3.6 0 0 1 68.8,8.4" fill="none" stroke="#e8e8e8" stroke-width="1.6"/>
<rect x="60" y="12.3" width="10" height="6.5" rx="1.2" fill="#e8e8e8"/>
<path d="M90.8,12 Q98.5,3.8 106.1,12 Q98.5,20.2 90.8,12 Z" fill="#ececec"/>
<circle cx="98.7" cy="12" r="3.4" fill="#1b2029"/>
<circle cx="100" cy="10.8" r="1.1" fill="#ececec"/>
</svg>
<div class="t" style="left:35.5px;top:815px;font-size:13px;color:#b8bcc0">3</div>
<svg style="left:0;top:879px" width="120" height="24">
<rect x="21" y="7.1" width="13" height="9.9" rx="2" fill="#c8ccd0"/>
<polygon points="25.9,9.7 25.9,14.9 30.1,12.3" fill="#1b2029"/>
<path d="M61.8,12.2 V9 A3.6,3.6 0 0 1 68.8,8.4" fill="none" stroke="#e8e8e8" stroke-width="1.6"/>
<rect x="60" y="12.3" width="10" height="6.5" rx="1.2" fill="#e8e8e8"/>
<path d="M90.8,12 Q98.5,3.8 106.1,12 Q98.5,20.2 90.8,12 Z" fill="#ececec"/>
<circle cx="98.7" cy="12" r="3.4" fill="#1b2029"/>
<circle cx="100" cy="10.8" r="1.1" fill="#ececec"/>
</svg>
<div class="t" style="left:35.5px;top:885px;font-size:13px;color:#b8bcc0">2</div>
<svg style="left:0;top:959px" width="120" height="24">
<rect x="21" y="7.1" width="13" height="9.9" rx="2" fill="#c8ccd0"/>
<polygon points="25.9,9.7 25.9,14.9 30.1,12.3" fill="#1b2029"/>
<path d="M61.8,12.2 V9 A3.6,3.6 0 0 1 68.8,8.4" fill="none" stroke="#e8e8e8" stroke-width="1.6"/>
<rect x="60" y="12.3" width="10" height="6.5" rx="1.2" fill="#e8e8e8"/>
<path d="M90.8,12 Q98.5,3.8 106.1,12 Q98.5,20.2 90.8,12 Z" fill="#ececec"/>
<circle cx="98.7" cy="12" r="3.4" fill="#1b2029"/>
<circle cx="100" cy="10.8" r="1.1" fill="#ececec"/>
</svg>
<div class="t" style="left:35.5px;top:965px;font-size:13px;color:#b8bcc0">1</div>
<!-- menu -->
<div class="a" style="left:118px;top:33px;width:325px;height:493px;background:#212c39;box-shadow:0 2px 6px rgba(0,0,0,.4)"></div>
<!-- menu items -->
<div class="a" style="left:121px;top:197px;width:320px;height:40px;background:#434d58"></div>
<div class="a" style="left:129px;top:203px;width:100px;height:35px;border:3px solid #fb3a34"></div>
<div class="a" style="left:121px;top:156px;width:320px;height:1px;background:#34404c"></div>
<div class="a" style="left:121px;top:358px;width:320px;height:1px;background:#34404c"></div>
<div class="a" style="left:121px;top:399px;width:320px;height:1px;background:#34404c"></div>
<div class="a" style="left:121px;top:441px;width:320px;height:1px;background:#34404c"></div>
<div class="a" style="left:121px;top:482px;width:320px;height:1px;background:#34404c"></div>
<div class="t" style="left:150px;letter-spacing:0.3px;top:49.0px;font-size:16px;color:#e1e1e1">新建项目</div>
<svg style="left:428px;top:50.0px" width="7" height="12"><polygon points="0,0 6,5.5 0,11" fill="#d8d8d8"/></svg>
<div class="t" style="left:150px;letter-spacing:0.3px;top:88.5px;font-size:16px;color:#e1e1e1">打开项目</div>
<div class="t" style="left:296px;top:88.5px;font-size:16px;letter-spacing:0.7px;color:#e1e1e1">Ctrl+O</div>
<div class="t" style="left:150px;letter-spacing:0.3px;top:128.5px;font-size:16px;color:#e1e1e1">打开最近使用的内容</div>
<svg style="left:428px;top:129.5px" width="7" height="12"><polygon points="0,0 6,5.5 0,11" fill="#d8d8d8"/></svg>
<div class="t" style="left:150px;letter-spacing:0.3px;top:169.5px;font-size:16px;color:#e1e1e1">导入</div>
<svg style="left:428px;top:170.5px" width="7" height="12"><polygon points="0,0 6,5.5 0,11" fill="#d8d8d8"/></svg>
<div class="t" style="left:150px;letter-spacing:0.3px;top:209.5px;font-size:16px;color:#e1e1e1">录制</div>
<svg style="left:428px;top:210.5px" width="7" height="12"><polygon points="0,0 6,5.5 0,11" fill="#d8d8d8"/></svg>
<div class="t" style="left:150px;letter-spacing:0.3px;top:249.5px;font-size:16px;color:#5d6874">保存项目文件</div>
<div class="t" style="left:296px;top:249.5px;font-size:16px;letter-spacing:0.7px;color:#5d6874">Ctrl+S</div>
<div class="t" style="left:150px;letter-spacing:0.3px;top:289.5px;font-size:16px;color:#5d6874">项目另存为...</div>
<div class="t" style="left:296px;top:289.5px;font-size:16px;letter-spacing:0.7px;color:#5d6874">Ctrl+Shift+S</div>
<div class="t" style="left:150px;letter-spacing:0.3px;top:329.5px;font-size:16px;color:#5d6874">归档项目文件</div>
<div class="t" style="left:296px;top:329.5px;font-size:16px;letter-spacing:0.7px;color:#5d6874">Ctrl+Shift+A</div>
<div class="t" style="left:150px;letter-spacing:0.3px;top:372.5px;font-size:16px;color:#e1e1e1">导出</div>
<svg style="left:428px;top:373.5px" width="7" height="12"><polygon points="0,0 6,5.5 0,11" fill="#d8d8d8"/></svg>
<div class="t" style="left:150px;letter-spacing:0.3px;top:414.5px;font-size:16px;color:#e1e1e1">项目参数设置</div>
<div class="t" style="left:150px;letter-spacing:0.3px;top:454.5px;font-size:16px;color:#e1e1e1">首选项</div>
<div class="t" style="left:296px;top:454.5px;font-size:16px;letter-spacing:0.7px;color:#e1e1e1">Ctrl+Shift+,</div>
<div class="t" style="left:150px;letter-spacing:0.3px;top:496.5px;font-size:16px;color:#e1e1e1">退出</div>
<div class="t" style="left:296px;top:496.5px;font-size:16px;letter-spacing:0.7px;color:#e1e1e1">Alt+F4</div>
</body></html>
